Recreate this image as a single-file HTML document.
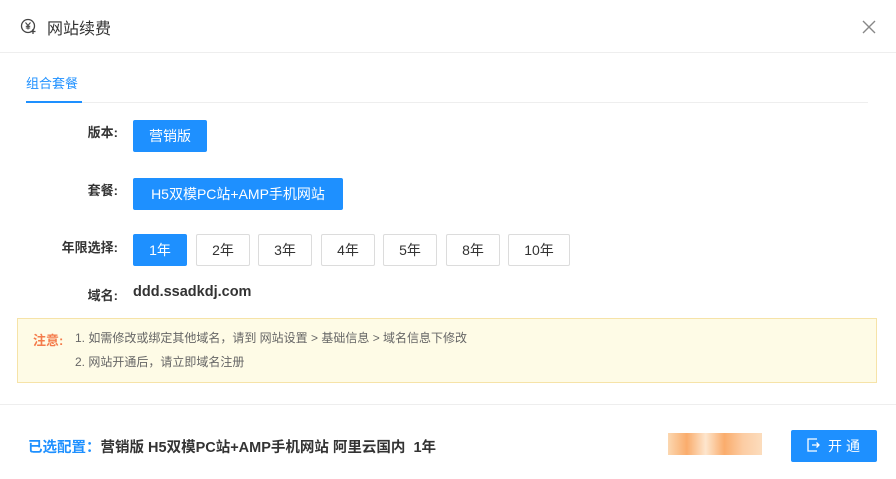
<!DOCTYPE html>
<html><head><meta charset="utf-8"><style>
*{margin:0;padding:0;box-sizing:border-box}
body{width:896px;height:479px;background:#fff;font-family:"Liberation Sans","Noto Sans CJK SC",sans-serif;position:relative;overflow:hidden;color:#333}
.a{position:absolute}
.btn{position:absolute;height:32px;line-height:30px;text-align:center;font-size:14px;border:1px solid #dcdcdc;color:#333;background:#fff;border-radius:2px}
.on{background:#1e90ff;border-color:#1e90ff;color:#fff}
.lbl{position:absolute;font-size:13px;font-weight:bold;color:#333;text-align:right;width:80px;left:38px}
</style></head><body>
<svg class="a" style="left:20px;top:18px" width="18" height="18" viewBox="0 0 18 18"><circle cx="8" cy="8" r="6.5" fill="none" stroke="#444" stroke-width="1.3"/><path d="M5.5 4.5L8 7.5L10.5 4.5M8 7.5V11.5M5.8 8.3H10.2M5.8 10H10.2" stroke="#444" stroke-width="1.1" fill="none"/><path d="M13 11v5M10.5 13.5h5" stroke="#444" stroke-width="1.3"/></svg>
<div class="a" style="left:47px;top:15px;font-size:16px;color:#333">网站续费</div>
<svg class="a" style="left:862px;top:20px" width="14" height="14"><path d="M1 1L13 13M13 1L1 13" stroke="#888" stroke-width="1.4"/></svg>
<div class="a" style="left:0;top:52px;width:896px;height:1px;background:#eee"></div>
<div class="a" style="left:26px;top:73px;font-size:13px;color:#1e90ff">组合套餐</div>
<div class="a" style="left:26px;top:102px;width:842px;height:1px;background:#eee"></div>
<div class="a" style="left:26px;top:101px;width:56px;height:2px;background:#1e90ff"></div>
<div class="lbl" style="top:122px">版本:</div>
<div class="btn on" style="left:133px;top:120px;width:74px">营销版</div>
<div class="lbl" style="top:180px">套餐:</div>
<div class="btn on" style="left:133px;top:178px;width:210px">H5双模PC站+AMP手机网站</div>
<div class="lbl" style="top:237px">年限选择:</div>
<div class="btn on" style="left:133px;top:234px;width:54px">1年</div>
<div class="btn" style="left:196px;top:234px;width:54px">2年</div>
<div class="btn" style="left:258px;top:234px;width:54px">3年</div>
<div class="btn" style="left:321px;top:234px;width:54px">4年</div>
<div class="btn" style="left:383px;top:234px;width:54px">5年</div>
<div class="btn" style="left:446px;top:234px;width:54px">8年</div>
<div class="btn" style="left:508px;top:234px;width:62px">10年</div>
<div class="lbl" style="top:285px">域名:</div>
<div class="a" style="left:133px;top:284px;font-size:14.5px;font-weight:bold;color:#333">ddd.ssadkdj.com</div>
<div class="a" style="left:17px;top:318px;width:860px;height:65px;background:#fefbe6;border:1px solid #f6e3a8"></div>
<div class="a" style="left:33px;top:330px;font-size:13px;font-weight:bold;color:#f47b4a">注意:</div>
<div class="a" style="left:75px;top:329px;font-size:12px;color:#666">1. 如需修改或绑定其他域名，请到 网站设置 &gt; 基础信息 &gt; 域名信息下修改</div>
<div class="a" style="left:75px;top:353px;font-size:12px;color:#666">2. 网站开通后，请立即域名注册</div>
<div class="a" style="left:0;top:404px;width:896px;height:1px;background:#eee"></div>
<div class="a" style="left:28px;top:436px;font-size:14.5px;font-weight:bold;color:#1e90ff">已选配置：<span style="color:#333">营销版 H5双模PC站+AMP手机网站 阿里云国内&nbsp; 1年</span></div>
<div class="a" style="left:668px;top:433px;width:94px;height:22px;background:linear-gradient(90deg,#fbd3a8,#f9a35c 20%,#fde3c8 40%,#f9a35c 60%,#fcc79a 80%,#fbd9b6);opacity:.9"></div>
<div class="a" style="left:791px;top:430px;width:86px;height:32px;background:#1e90ff;border-radius:2px;color:#fff;font-size:14px;line-height:32px;padding-left:37px;letter-spacing:4px">开通</div>
<svg class="a" style="left:807px;top:438px" width="14" height="14"><path d="M10 1H1V13H10M5 7H12M9.5 4.5L12 7L9.5 9.5" stroke="#fff" stroke-width="1.3" fill="none"/></svg>
</body></html>
